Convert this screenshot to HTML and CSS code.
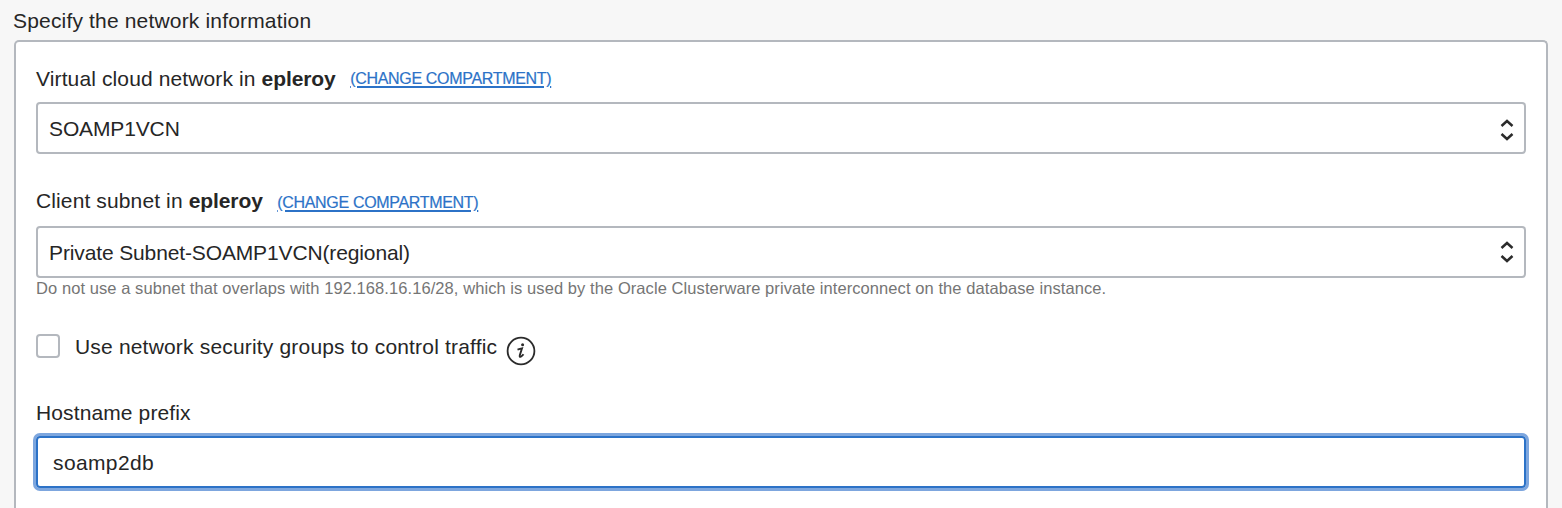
FILE: index.html
```html
<!DOCTYPE html>
<html lang="en">
<head>
<meta charset="utf-8">
<title>Network information</title>
<link rel="stylesheet" href="styles.css">
</head>
<body>
<h2 class="section-title"><span class="t-title">Specify the network information</span></h2>
<section class="panel">
  <div class="field-head">
    <span class="label t-vcn">Virtual cloud network in <b>epleroy</b></span>
    <a class="change"><span>(CHANGE COMPARTMENT)</span></a>
  </div>
  <div class="select">
    <span class="value">SOAMP1VCN</span>
    <svg class="arrows" viewBox="0 0 14 22" width="14" height="22"><path d="M1.500 7 7 2l5.500 5M1.500 15 7 20l5.500-5"/></svg>
  </div>
  <div class="field-head second">
    <span class="label t-subnet">Client subnet in <b>epleroy</b></span>
    <a class="change low"><span>(CHANGE COMPARTMENT)</span></a>
  </div>
  <div class="select up">
    <span class="value">Private Subnet-SOAMP1VCN(regional)</span>
    <svg class="arrows" viewBox="0 0 14 22" width="14" height="22"><path d="M1.500 7 7 2l5.500 5M1.500 15 7 20l5.500-5"/></svg>
  </div>
  <p class="hint">Do not use a subnet that overlaps with 192.168.16.16/28, which is used by the Oracle Clusterware private interconnect on the database instance.</p>
  <div class="check-row">
    <span class="checkbox"></span>
    <span class="label t-check">Use network security groups to control traffic</span>
    <svg class="info" viewBox="0 0 30 30" width="30" height="30"><circle cx="15" cy="15" r="13.400"/><path class="stem" d="M11.500 13.700Q14 12.800 16 12.300L13.800 19.300Q13.300 21.400 14.800 20.700 16.300 19.800 17.500 18.200"/><circle class="dot" cx="16.600" cy="8.800" r="1.500"/></svg>
  </div>
  <div class="host-label label"><span class="t-host">Hostname prefix</span></div>
  <div class="input"><span class="t-input">soamp2db</span></div>
</section>
</body>
</html>
```
FILE: styles.css
```css
* { box-sizing: border-box; }
body {
  margin: 0;
  height: 508px;
  overflow: hidden;
  background: #f7f7f7;
  color: #262626;
  font: 21px/24px "Liberation Sans", Arial, sans-serif;
}
.section-title { margin: 0; padding: 9px 0 0 13px; height: 40px; font-size: 21px; font-weight: 400; letter-spacing: 0.17px; }
.panel {
  margin: 0 14px;
  height: 468px;
  padding: 25px 20px 0;
  background: #fff;
  border: 2px solid #b4b8be;
  border-bottom: 0;
  border-radius: 5px 5px 0 0;
}
.field-head { display: flex; height: 35px; align-items: flex-start; gap: 14.5px; }
.field-head.second { height: 72px; padding-top: 35px; }
.label { white-space: nowrap; letter-spacing: 0.12px; }
.label b { letter-spacing: -0.08px; }
.change { color: #2c72c7; font-size: 16px; letter-spacing: -0.32px; line-height: 20px; padding-top: 2px; text-decoration: underline; text-decoration-thickness: 2px; text-underline-offset: 2px; white-space: nowrap; -webkit-text-stroke: 0.2px; }
.change.low { padding-top: 4px; }
.select {
  display: flex;
  align-items: center;
  justify-content: space-between;
  height: 52px;
  padding: 0 10px 0 11px;
  border: 2px solid #b4b8be;
  border-radius: 4px;
}
.value { letter-spacing: -0.13px; padding-top: 1px; }
.arrows { fill: none; stroke: #2b2b2b; stroke-width: 2.5; margin-top: 4px; }
.up .arrows { margin-top: 0; }
.hint { margin: 0; height: 56px; font-size: 16.5px; letter-spacing: 0.075px; line-height: 20px; color: #757575; white-space: nowrap; }
.check-row { display: flex; height: 67px; align-items: flex-start; }
.checkbox { width: 24px; height: 24px; margin-right: 15px; border: 2px solid #b4b8be; border-radius: 4px; }
.t-check { margin-top: 1px; letter-spacing: 0.18px; }
.info { margin: 2px 0 0 9px; fill: none; stroke: #2b2b2b; stroke-width: 1.8; }
.info .stem { stroke-width: 1.9; }
.info .dot { fill: #2b2b2b; stroke: none; }
.host-label { height: 35px; }
.input {
  display: flex;
  align-items: center;
  height: 52px;
  padding: 1px 15px 0;
  border: 2px solid #2c72c7;
  border-radius: 4px;
  letter-spacing: 0.38px;
  box-shadow: 0 0 0 3px #7da6de;
}
```
